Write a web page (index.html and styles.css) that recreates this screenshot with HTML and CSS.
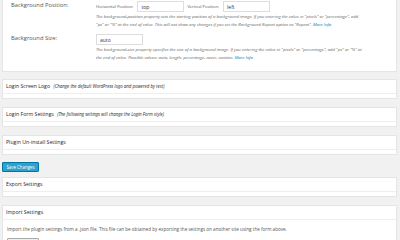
FILE: index.html
```html
<!DOCTYPE html>
<html lang="en">
<head>
    <meta charset="UTF-8">
    <title>Login Settings</title>
    <link rel="stylesheet" href="styles.css">
</head>
<body>
    <div class="wrap">
        <div class="postbox first">
            <div class="field-row">
                <div class="field-label">Background Position:</div>
                <div class="field-main">
                    <div class="inline-fields">
                        <span class="sub-label">Horizontal Position:</span>
                        <input type="text" class="small-text" value="top">
                        <span class="sub-label">Vertical Position:</span>
                        <input type="text" class="small-text" value="left">
                    </div>
                    <p class="description">The background-position property sets the starting position of a background image. If you entering the value in "pixels" or "percentage", add<br>"px" or "%" at the end of value. This will not show any changes if you set the Background Repeat option as "Repeat". <a href="#">More Info</a></p>
                </div>
            </div>
            <div class="field-row">
                <div class="field-label">Background Size:</div>
                <div class="field-main">
                    <input type="text" class="small-text" value="auto">
                    <p class="description">The background-size property specifies the size of a background image. If you entering the value in "pixels" or "percentage", add "px" or "%" at<br>the end of value. Possible values: auto, length, percentage, cover, contain. <a href="#">More Info</a></p>
                </div>
            </div>
        </div>

        <div class="postbox">
            <h3 class="hndle">Login Screen Logo <span class="hint">(Change the default WordPress logo and powered by text)</span></h3>
            <div class="inside"></div>
        </div>

        <div class="postbox">
            <h3 class="hndle">Login Form Settings <span class="hint">(The following settings will change the Login Form style)</span></h3>
            <div class="inside"></div>
        </div>

        <div class="postbox">
            <h3 class="hndle">Plugin Un-install Settings</h3>
            <div class="inside"></div>
        </div>

        <button class="button-primary">Save Changes</button>

        <div class="postbox">
            <h3 class="hndle">Export Settings</h3>
            <div class="inside"></div>
        </div>

        <div class="postbox">
            <h3 class="hndle">Import Settings</h3>
            <div class="inside import">
                <p>Import the plugin settings from a .json file. This file can be obtained by exporting the settings on another site using the form above.</p>
                <div class="file-row">
                    <span class="file-button">Choose File</span>
                    <span class="file-name">No file chosen</span>
                </div>
            </div>
        </div>
    </div>
</body>
</html>
```

FILE: styles.css
```css
body {
    margin: 0;
    background-color: #f1f1f1;
    font-family: "Open Sans", "DejaVu Sans", sans-serif;
    color: #444;
}
.wrap {
    padding: 0 3px 0 2px;
}
.postbox {
    background: #fff;
    border: 1px solid #e5e5e5;
    margin-bottom: 8px;
}
.postbox.first {
    border-top: none;
    padding: 1px 0 10px;
    margin-bottom: 7px;
}
.field-row {
    display: flex;
    margin-bottom: 6px;
}
.field-row:last-child {
    margin-bottom: 0;
}
.field-label {
    width: 85px;
    padding-left: 8px;
    font-size: 5.8px;
    line-height: 8px;
    color: #555;
}
.field-main {
    flex: 1;
    padding-right: 2px;
}
.inline-fields {
    display: flex;
    align-items: center;
}
.sub-label {
    font-size: 4.1px;
    color: #555;
    margin-right: 4px;
}
.small-text {
    display: block;
    box-sizing: border-box;
    width: 47px;
    height: 11px;
    margin: 0 3px 0 0;
    padding: 0 3px;
    border: 1px solid #ddd;
    font-family: inherit;
    font-size: 5px;
    color: #333;
    outline: none;
}
.description {
    margin: 1px 0 0;
    font-size: 4.25px;
    line-height: 7.5px;
    font-style: italic;
    color: #666;
}
.description a {
    color: #0073aa;
    text-decoration: none;
}
.hndle {
    margin: 0;
    height: 13px;
    line-height: 13px;
    padding: 0 3px;
    font-size: 5.2px;
    font-weight: normal;
    color: #23282d;
    border-bottom: 1px solid #eee;
}
.hint {
    margin-left: 2px;
    font-size: 4.4px;
    font-style: italic;
}
.inside {
    height: 4px;
}
.button-primary {
    display: block;
    width: 37px;
    height: 10px;
    padding: 0;
    margin: 7px 0 5px;
    border: 1px solid #0074a2;
    border-radius: 1px;
    background: #2ea2cc;
    color: #fff;
    font-family: inherit;
    font-size: 4.4px;
}
.postbox + .button-primary {
    margin-top: -1px;
}
.inside.import {
    height: auto;
    padding: 6px 4px;
}
.inside.import p {
    margin: 0 0 5px;
    font-size: 4.6px;
    line-height: 7px;
    color: #555;
}
.file-row {
    display: flex;
    align-items: center;
    font-size: 4.6px;
}
.file-button {
    padding: 2px 3px;
    border: 1px solid #aaa;
    border-radius: 1px;
    background: #eee;
    margin-right: 3px;
}
```
